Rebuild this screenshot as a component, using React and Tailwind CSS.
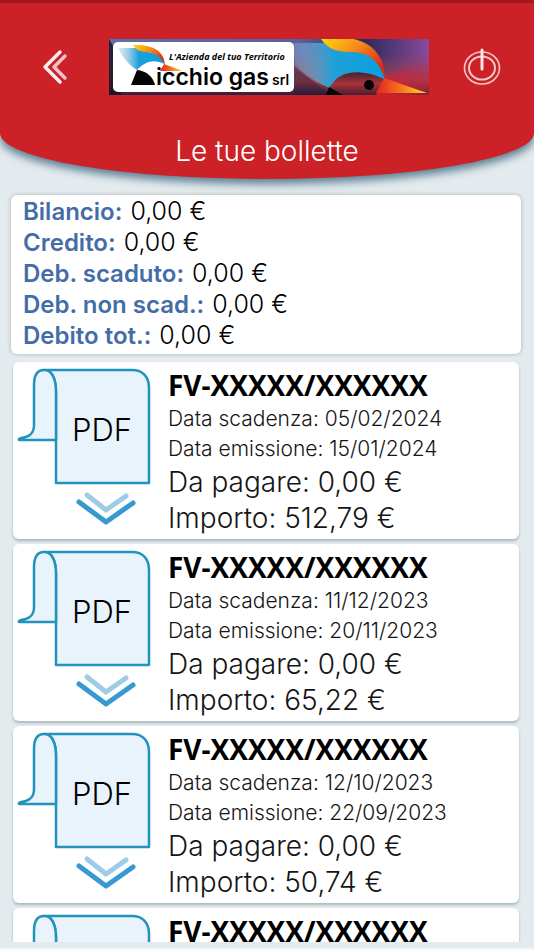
const BALANCES = [
  { label: "Bilancio:", value: "0,00 €" },
  { label: "Credito:", value: "0,00 €" },
  { label: "Deb. scaduto:", value: "0,00 €" },
  { label: "Deb. non scad.:", value: "0,00 €" },
  { label: "Debito tot.:", value: "0,00 €" },
]

const BILLS = [
  { id: 1, number: "FV-XXXXX/XXXXXX", due: "05/02/2024", issued: "15/01/2024", toPay: "0,00 €", amount: "512,79 €" },
  { id: 2, number: "FV-XXXXX/XXXXXX", due: "11/12/2023", issued: "20/11/2023", toPay: "0,00 €", amount: "65,22 €" },
  { id: 3, number: "FV-XXXXX/XXXXXX", due: "12/10/2023", issued: "22/09/2023", toPay: "0,00 €", amount: "50,74 €" },
  { id: 4, number: "FV-XXXXX/XXXXXX" },
]

function Logo() {
  return (
    <svg viewBox="0 0 320 56" className="h-14 w-80" role="img" aria-label="Picchio gas srl">
      <defs>
        <linearGradient id="sky" x1="0" y1="0" x2="1" y2="0">
          <stop offset="0" stopColor="#5f6fa8" />
          <stop offset="0.6" stopColor="#5a5f9c" />
          <stop offset="0.8" stopColor="#2c2a5c" />
          <stop offset="1" stopColor="#8a4a9c" />
        </linearGradient>
        <linearGradient id="dusk" x1="0" y1="0" x2="0" y2="1">
          <stop offset="0.25" stopColor="#a8444c" stopOpacity="0" />
          <stop offset="0.75" stopColor="#a83e42" stopOpacity="0.9" />
          <stop offset="1" stopColor="#2a1c3c" />
        </linearGradient>
        <linearGradient id="glow" x1="0" y1="1" x2="1" y2="0">
          <stop offset="0.2" stopColor="#d8202c" stopOpacity="0.9" />
          <stop offset="1" stopColor="#c02050" stopOpacity="0" />
        </linearGradient>
        <linearGradient id="crest" x1="0" y1="0" x2="1" y2="0.6">
          <stop offset="0" stopColor="#ffd80a" />
          <stop offset="0.5" stopColor="#f58a1c" />
          <stop offset="1" stopColor="#dd2a1c" />
        </linearGradient>
        <linearGradient id="beak" x1="0" y1="0" x2="1" y2="0">
          <stop offset="0" stopColor="#e3221c" />
          <stop offset="0.5" stopColor="#f4791f" />
          <stop offset="1" stopColor="#ffe01a" />
        </linearGradient>
        <linearGradient id="wing" x1="0" y1="0" x2="1" y2="0">
          <stop offset="0" stopColor="#9fc3e0" stopOpacity="0.3" />
          <stop offset="0.45" stopColor="#1fa0d8" />
          <stop offset="1" stopColor="#08a0e0" />
        </linearGradient>
        <linearGradient id="head" x1="0" y1="0" x2="0" y2="1">
          <stop offset="0" stopColor="#43202f" />
          <stop offset="0.5" stopColor="#a8343a" />
          <stop offset="1" stopColor="#4a1e34" />
        </linearGradient>
      </defs>
      <rect width="320" height="56" fill="url(#sky)" />
      <rect width="320" height="56" fill="url(#dusk)" />
      <path d="M262 46Q292 30 320 20V56H262Z" fill="url(#glow)" />
      <path d="M0 0V56H12V20Z" fill="#10131f" opacity="0.8" />
      <path d="M185 28L222 56H185Z" fill="#241a38" opacity="0.4" />

      {/* large bird */}
      <path d="M220 49C230 30 254 30 276 39L267 56H222Z" fill="url(#head)" />
      <path d="M184 4H216C222 14 250 8 264 18C272 24 275 32 275 40C254 30 236 32 227 40L220 49C204 42 194 34 186 26Z" fill="url(#wing)" />
      <path d="M212 0H244C264 4 276 18 276 40C270 22 260 14 244 13C228 13 220 11 212 0Z" fill="url(#crest)" />
      <path d="M220 48L234 56H217Z" fill="#050505" />
      <path d="M275 39L318 54H267Z" fill="url(#beak)" />
      <circle cx="260" cy="46" r="5" fill="#050505" />

      {/* name plate */}
      <rect x="4" y="3" width="181" height="50" rx="5" fill="#fff" />
      <path d="M9 9H28C36 16 52 10 55 25C46 20 36 22 28 31C20 26 13 18 9 9Z" fill="url(#wing)" />
      <path d="M24 6C42 5 56 11 56 27C53 18 46 14 38 13C30 13 28 11 24 6Z" fill="url(#crest)" />
      <path d="M55 25L74 32H51Z" fill="url(#beak)" />
      <path d="M22 46L28 31C38 32 44 38 46 46Z" fill="#050505" />
      <text x="60" y="21" className="fill-black font-['Open_Sans'] text-[9px] font-bold italic">L'Azienda del tuo Territorio</text>
      <text x="47" y="46" className="fill-black font-['Inter'] text-[23px] font-semibold">icchio gas</text>
      <text x="163" y="46" className="fill-black font-['Inter'] text-[14px] font-semibold">srl</text>
    </svg>
  )
}

function Header() {
  return (
    <header className="relative z-10 shrink-0 rounded-b-[50%_46px] border-t-[3px] border-[#a3181f] bg-[#cd2128] shadow-[0_5px_9px_#5d7f93]">
      <div className="flex items-center justify-between px-8 pt-9">
        <button type="button" aria-label="Indietro" className="flex h-12 w-11 items-center justify-center">
          <svg viewBox="0 0 28 36" className="h-9 w-7" fill="none" strokeWidth="3.5" strokeLinecap="round" strokeLinejoin="round">
            <path d="M25 7L14 18L25 29" stroke="#e9c4c7" />
            <path d="M20 3L5 18L20 33" stroke="#fbeeee" />
          </svg>
        </button>
        <Logo />
        <button type="button" aria-label="Esci" className="flex size-10 items-center justify-center">
          <svg viewBox="0 0 40 38" className="h-[38px] w-10 shrink-0" fill="none" stroke="#f3c9cb">
            <ellipse cx="20" cy="20" rx="17.5" ry="16" strokeWidth="1.6" />
            <ellipse cx="20" cy="20" rx="13" ry="11.5" strokeWidth="2" />
            <path d="M20 2V21" stroke="#fbe6e6" strokeWidth="3" strokeLinecap="round" />
          </svg>
        </button>
      </div>
      <h1 className="pt-[38px] pb-2.5 text-center text-[28px] leading-9 font-light text-white">Le tue bollette</h1>
    </header>
  )
}

function Summary() {
  return (
    <dl className="mt-4 mr-[13px] ml-[11px] shrink-0 rounded-md bg-white px-3 pt-px pb-[3px] text-[24px] leading-[31px] shadow-[0_0_4px_#a3b0b5]">
      {BALANCES.map((b) => (
        <div key={b.label} className="flex gap-2">
          <dt className="font-semibold text-[#446da8]">{b.label}</dt>
          <dd className="text-[25px] font-light text-black">{b.value}</dd>
        </div>
      ))}
    </dl>
  )
}

function PdfButton({ number }) {
  return (
    <button type="button" aria-label={"Scarica PDF " + number} className="h-44 w-[155px] shrink-0">
      <svg viewBox="0 0 155 176" className="h-full w-full" fill="none" strokeLinecap="round" strokeLinejoin="round">
        <g fill="#e8f3fb" stroke="#2193bd" strokeWidth="2.5">
          <path d="M31 8H119C130 8 136 15 136 26V121H43V30C43 17 39 8 31 8Z" />
          <path d="M31 8C24 8 21 13 21 23V63C21 72 16 75 8 76C5 77 5 78 8 78H43V30C43 17 39 8 31 8Z" />
        </g>
        <text x="89" y="79" textAnchor="middle" className="fill-black text-[31px] font-light">PDF</text>
        <path d="M74 133L93 148L113 134" stroke="#9dcce6" strokeWidth="5" />
        <path d="M66 140L93 160L120 141" stroke="#3799d0" strokeWidth="5" />
      </svg>
    </button>
  )
}

function BillCard({ bill }) {
  return (
    <li className="flex min-h-[177px] shrink-0 rounded-md bg-white shadow-[0_2px_3px_#a9b5b9]">
      <PdfButton number={bill.number} />
      <div className="min-w-0 flex-1 pt-1 pb-[3px] whitespace-nowrap text-[#151515]">
        <h2 className="font-['Open_Sans','Noto_Sans',sans-serif] text-[28px] leading-[38px] font-bold text-black">{bill.number}</h2>
        {bill.due && (
          <>
            <p className="text-[21px] leading-[30px] font-light">Data scadenza: {bill.due}</p>
            <p className="text-[21px] leading-[30px] font-light">Data emissione: {bill.issued}</p>
            <p className="text-[28px] leading-9 font-light">Da pagare: {bill.toPay}</p>
            <p className="text-[28px] leading-9 font-light">Importo: {bill.amount}</p>
          </>
        )}
      </div>
    </li>
  )
}

export default function App() {
  return (
    <div className="flex h-screen flex-col overflow-hidden border-b-2 border-[#f4f6f7] bg-[#e4ebee] font-['Inter','Open_Sans',sans-serif]">
      <Header />
      <Summary />
      <main className="mt-1 mb-1.5 min-h-0 flex-1 overflow-y-auto pt-1 [scrollbar-width:none]">
        <ul className="mr-[15px] ml-[13px] flex flex-col gap-[5px]">
          {BILLS.map((bill) => (
            <BillCard key={bill.id} bill={bill} />
          ))}
        </ul>
      </main>
    </div>
  )
}
